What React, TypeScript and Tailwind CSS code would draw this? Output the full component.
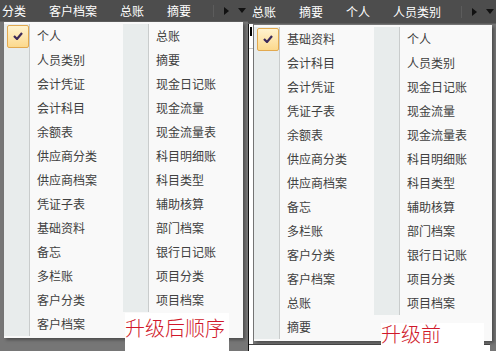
import React from "react";

const font = { fontFamily: '"Noto Sans CJK SC", "Noto Sans", sans-serif' };

function Check() {
  return (
    <div className="w-[22px] h-[23px] ml-[3px] rounded-[2px] border border-[#e2a94f] bg-gradient-to-b from-[#fff3cf] to-[#fcd98c] flex items-center justify-center">
      <svg width="10" height="8" viewBox="0 0 10 8">
        <path d="M1 4 L4 7 L9 1" stroke="#3d2a5a" strokeWidth="2.2" fill="none" />
      </svg>
    </div>
  );
}

function Row({ text, checked }: { text: string; checked?: boolean }) {
  return (
    <div className="flex h-[24px]">
      <div className="w-[26px] h-full bg-[#e8ecec] border-r border-[#c9cccc] flex items-center">
        {checked ? <Check /> : null}
      </div>
      <div className="pl-[7px] flex items-center text-[12px] text-[#404040] whitespace-nowrap">{text}</div>
    </div>
  );
}

function Col({ items, checkFirst, w }: { items: string[]; checkFirst?: boolean; w: string }) {
  return (
    <div className={"flex flex-col " + w}>
      {items.map((t, i) => (
        <Row key={t} text={t} checked={checkFirst && i === 0} />
      ))}
    </div>
  );
}

function Tri({ dir }: { dir: "right" | "down" }) {
  return dir === "right" ? (
    <svg width="5" height="8" viewBox="0 0 5 8">
      <path d="M0 0 L5 4 L0 8 Z" fill="#111" />
    </svg>
  ) : (
    <svg width="8" height="5" viewBox="0 0 8 5">
      <path d="M0 0 L8 0 L4 5 Z" fill="#111" />
    </svg>
  );
}

function TopBar({ tabs, h, lead }: { tabs: string[]; h: string; lead: string }) {
  return (
    <div className={"flex items-center bg-[#4d4d4d] text-white text-[12px] border-b border-[#5e5e5e] " + h}>
      <div className={"flex gap-[23px] " + lead}>
        {tabs.map((t) => (
          <span key={t} className="whitespace-nowrap">{t}</span>
        ))}
      </div>
      <div className="flex-1" />
      <div className="w-[1px] h-[12px] bg-[#5c5c5c]" />
      <div className="ml-[10px]"><Tri dir="right" /></div>
      <div className="ml-[9px] mr-[2px]"><Tri dir="down" /></div>
    </div>
  );
}

export default function App() {
  const left1 = ["个人", "人员类别", "会计凭证", "会计科目", "余额表", "供应商分类", "供应商档案", "凭证子表", "基础资料", "备忘", "多栏账", "客户分类", "客户档案"];
  const left2 = ["总账", "摘要", "现金日记账", "现金流量", "现金流量表", "科目明细账", "科目类型", "辅助核算", "部门档案", "银行日记账", "项目分类", "项目档案"];
  const right1 = ["基础资料", "会计科目", "会计凭证", "凭证子表", "余额表", "供应商分类", "供应商档案", "备忘", "多栏账", "客户分类", "客户档案", "总账", "摘要"];
  const right2 = ["个人", "人员类别", "现金日记账", "现金流量", "现金流量表", "科目明细账", "科目类型", "辅助核算", "部门档案", "银行日记账", "项目分类", "项目档案"];

  return (
    <div className="relative w-[496px] h-[351px] overflow-hidden flex bg-[#767676]" style={font}>
      {/* left panel */}
      <div className="w-[248px] h-full flex flex-col bg-[#767676]">
        <TopBar tabs={["分类", "客户档案", "总账", "摘要"]} h="h-[22px]" lead="ml-[2px]" />
        <div className="ml-[4px] w-[239px] py-[2px] bg-[#f9f9f9] flex shadow-[2px_2px_3px_rgba(0,0,0,0.35)]">
          <Col items={left1} checkFirst w="w-[119px]" />
          <Col items={left2} w="w-[120px]" />
        </div>
      </div>
      {/* right panel */}
      <div className="w-[248px] h-full flex flex-col bg-[#767676]">
        <TopBar tabs={["总账", "摘要", "个人", "人员类别"]} h="h-[24px]" lead="ml-[4px]" />
        <div className="flex flex-1">
          <div className="w-[6px] flex">
            <div className="w-[1px] bg-[#111]" />
            <div className="w-[4px] bg-white flex flex-col">
              <div className="mt-[3px] ml-[1px] w-[2px] h-[9px] bg-black" />
              <div className="mt-[12px] w-full h-[1px] bg-[#c8c8c8]" />
            </div>
          </div>
          <div className="flex flex-col">
            <div className="w-[238px] mt-[1px] py-[2px] bg-[#f9f9f9] flex shadow-[2px_2px_3px_rgba(0,0,0,0.35)]">
              <Col items={right1} checkFirst w="w-[120px]" />
              <Col items={right2} w="w-[118px]" />
            </div>
            <div className="mt-[3px] flex-1 bg-white -ml-[5px] w-[241px] border-t border-[#444]" />
          </div>
        </div>
      </div>

      {/* overlay labels */}
      <div className="absolute left-[125px] top-[313px] w-[104px] h-[38px] bg-white">
        <div className="pt-[3px] text-[20px] leading-[24px] font-light text-[#d0182a]">升级后顺序</div>
      </div>
      <div className="absolute left-[381px] top-[323px] w-[103px] h-[28px] bg-white">
        <div className="text-[20px] leading-[22px] font-light text-[#d0182a]">升级前</div>
      </div>
    </div>
  );
}
